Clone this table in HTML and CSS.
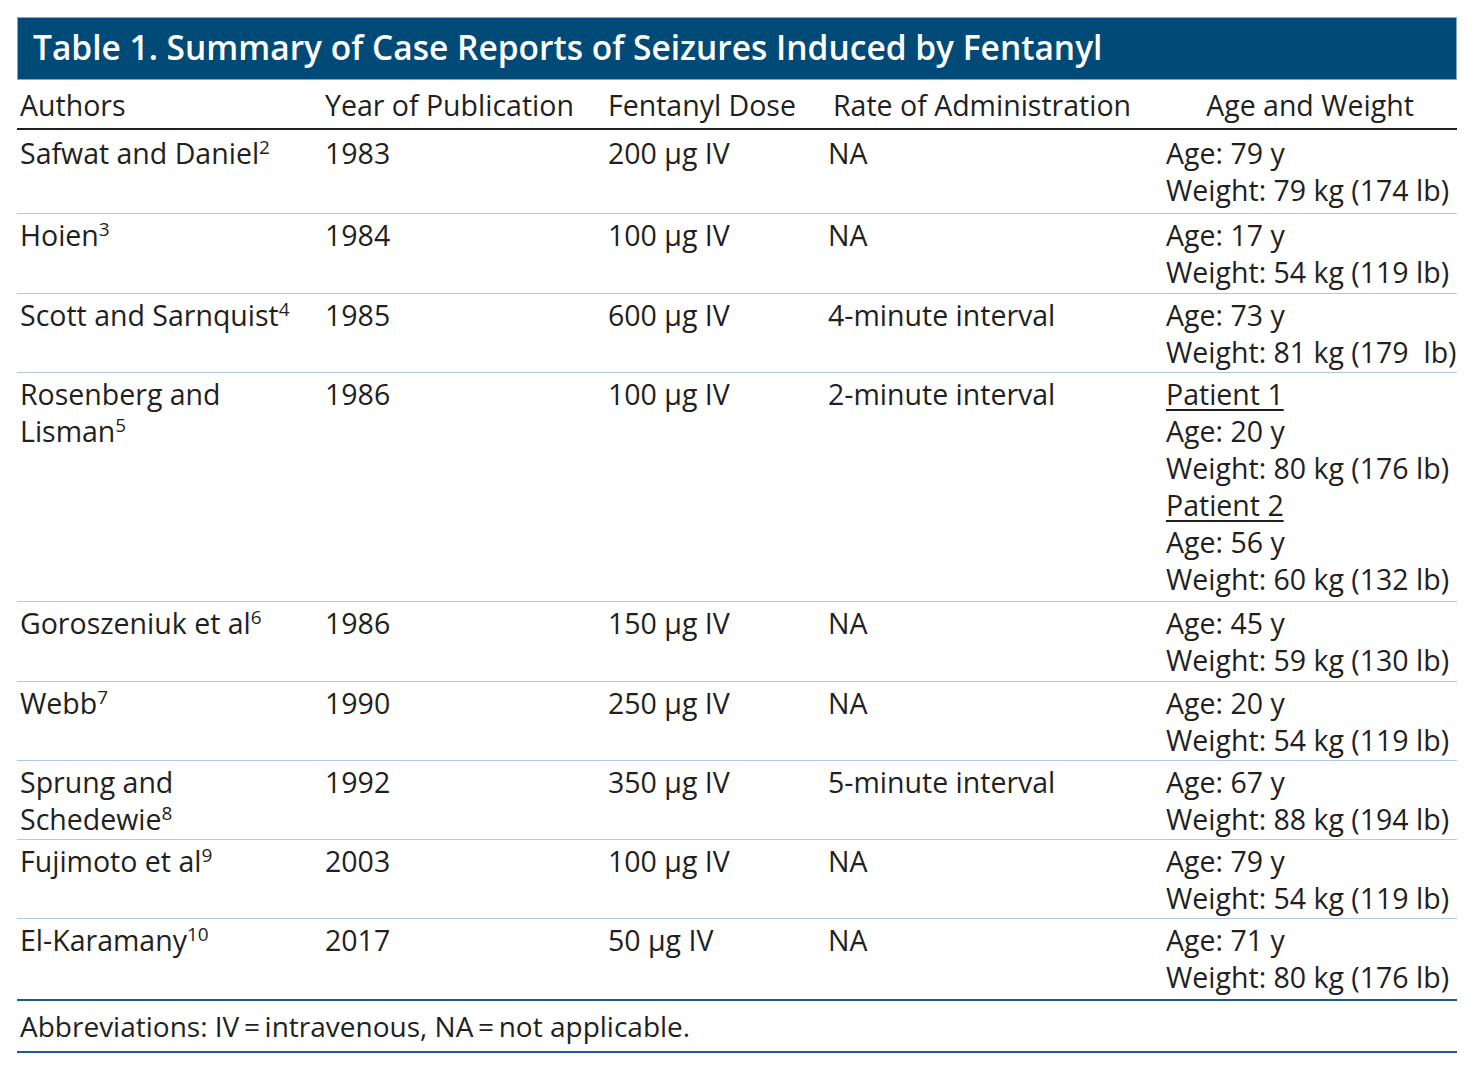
FILE: index.html
```html
<!DOCTYPE html>
<html lang="en">
<head>
<meta charset="utf-8">
<title>Table 1</title>
<link rel="stylesheet" href="styles.css">
</head>
<body>
<div class="wrap">
  <div class="title">Table 1. Summary of Case Reports of Seizures Induced by Fentanyl</div>
  <table class="tbl">
    <colgroup>
      <col class="c1"><col class="c2"><col class="c3"><col class="c4"><col class="c5">
    </colgroup>
    <thead>
      <tr>
        <th>Authors</th>
        <th>Year of Publication</th>
        <th>Fentanyl Dose</th>
        <th class="h-rate">Rate of Administration</th>
        <th class="h-age">Age and Weight</th>
      </tr>
    </thead>
    <tbody>
      <tr class="first">
        <td>Safwat and Daniel<sup>2</sup></td>
        <td>1983</td>
        <td>200 μg IV</td>
        <td>NA</td>
        <td>Age: 79 y<br>Weight: 79 kg (174 lb)</td>
      </tr>
      <tr class="tall">
        <td>Hoien<sup>3</sup></td>
        <td>1984</td>
        <td>100 μg IV</td>
        <td>NA</td>
        <td>Age: 17 y<br>Weight: 54 kg (119 lb)</td>
      </tr>
      <tr>
        <td>Scott and Sarnquist<sup>4</sup></td>
        <td>1985</td>
        <td>600 μg IV</td>
        <td>4-minute interval</td>
        <td>Age: 73 y<br>Weight: 81 kg (179&nbsp; lb)</td>
      </tr>
      <tr class="multi">
        <td>Rosenberg and<br>Lisman<sup>5</sup></td>
        <td>1986</td>
        <td>100 μg IV</td>
        <td>2-minute interval</td>
        <td><span class="pt">Patient 1</span><br>Age: 20 y<br>Weight: 80 kg (176 lb)<br><span class="pt">Patient 2</span><br>Age: 56 y<br>Weight: 60 kg (132 lb)</td>
      </tr>
      <tr class="tall">
        <td>Goroszeniuk et al<sup>6</sup></td>
        <td>1986</td>
        <td>150 μg IV</td>
        <td>NA</td>
        <td>Age: 45 y<br>Weight: 59 kg (130 lb)</td>
      </tr>
      <tr>
        <td>Webb<sup>7</sup></td>
        <td>1990</td>
        <td>250 μg IV</td>
        <td>NA</td>
        <td>Age: 20 y<br>Weight: 54 kg (119 lb)</td>
      </tr>
      <tr>
        <td>Sprung and<br>Schedewie<sup>8</sup></td>
        <td>1992</td>
        <td>350 μg IV</td>
        <td>5-minute interval</td>
        <td>Age: 67 y<br>Weight: 88 kg (194 lb)</td>
      </tr>
      <tr>
        <td>Fujimoto et al<sup>9</sup></td>
        <td>2003</td>
        <td>100 μg IV</td>
        <td>NA</td>
        <td>Age: 79 y<br>Weight: 54 kg (119 lb)</td>
      </tr>
      <tr class="last">
        <td>El-Karamany<sup>10</sup></td>
        <td>2017</td>
        <td>50 μg IV</td>
        <td>NA</td>
        <td>Age: 71 y<br>Weight: 80 kg (176 lb)</td>
      </tr>
    </tbody>
  </table>
  <div class="foot">Abbreviations: IV&thinsp;=&thinsp;intravenous, NA&thinsp;=&thinsp;not applicable.</div>
</div>
</body>
</html>
```

FILE: styles.css
```css
html, body {
  margin: 0;
  padding: 0;
  background: #ffffff;
}

body {
  font-family: "Open Sans", "Noto Sans", sans-serif;
  color: #231f20;
  font-size: 28.5px;
}

.wrap {
  width: 1440px;
  margin: 17px 0 0 17px;
}

.title {
  box-sizing: border-box;
  height: 63px;
  background: #004a77;
  border: 1px solid #86a8c6;
  color: #ffffff;
  font-weight: 600;
  font-size: 33.5px;
  line-height: 58px;
  padding-left: 15px;
  white-space: nowrap;
}

.tbl {
  width: 1440px;
  border-collapse: collapse;
  table-layout: fixed;
}

.c1 { width: 305px; }
.c2 { width: 283px; }
.c3 { width: 220px; }
.c4 { width: 338px; }
.c5 { width: 294px; }

.tbl th {
  font-weight: normal;
  text-align: left;
  line-height: 37px;
  padding: 7px 3px 4px;
  border-bottom: 2px solid #231f20;
  white-space: nowrap;
}

.tbl th.h-rate {
  padding-left: 8px;
}

.tbl th.h-age {
  text-align: center;
}

.tbl td {
  vertical-align: top;
  line-height: 37px;
  padding: 3px 3px 1px;
  border-bottom: 1px solid #adc8e5;
  white-space: nowrap;
}

.tbl tr.first td {
  padding-top: 5px;
  padding-bottom: 4px;
}

.tbl tr.tall td {
  padding-bottom: 2px;
}

.tbl tr.multi td {
  padding-bottom: 3px;
}

.tbl tr.last td {
  padding-bottom: 3px;
  border-bottom: 2px solid #1f5a8a;
}

.tbl sup {
  font-size: 19px;
  line-height: 0;
  vertical-align: 10px;
}

.pt {
  text-decoration: underline;
  text-decoration-thickness: 2px;
  text-underline-offset: 4px;
}

.foot {
  font-size: 28px;
  line-height: 50px;
  padding-left: 3px;
  border-bottom: 2px solid #1f5a8a;
}
```
